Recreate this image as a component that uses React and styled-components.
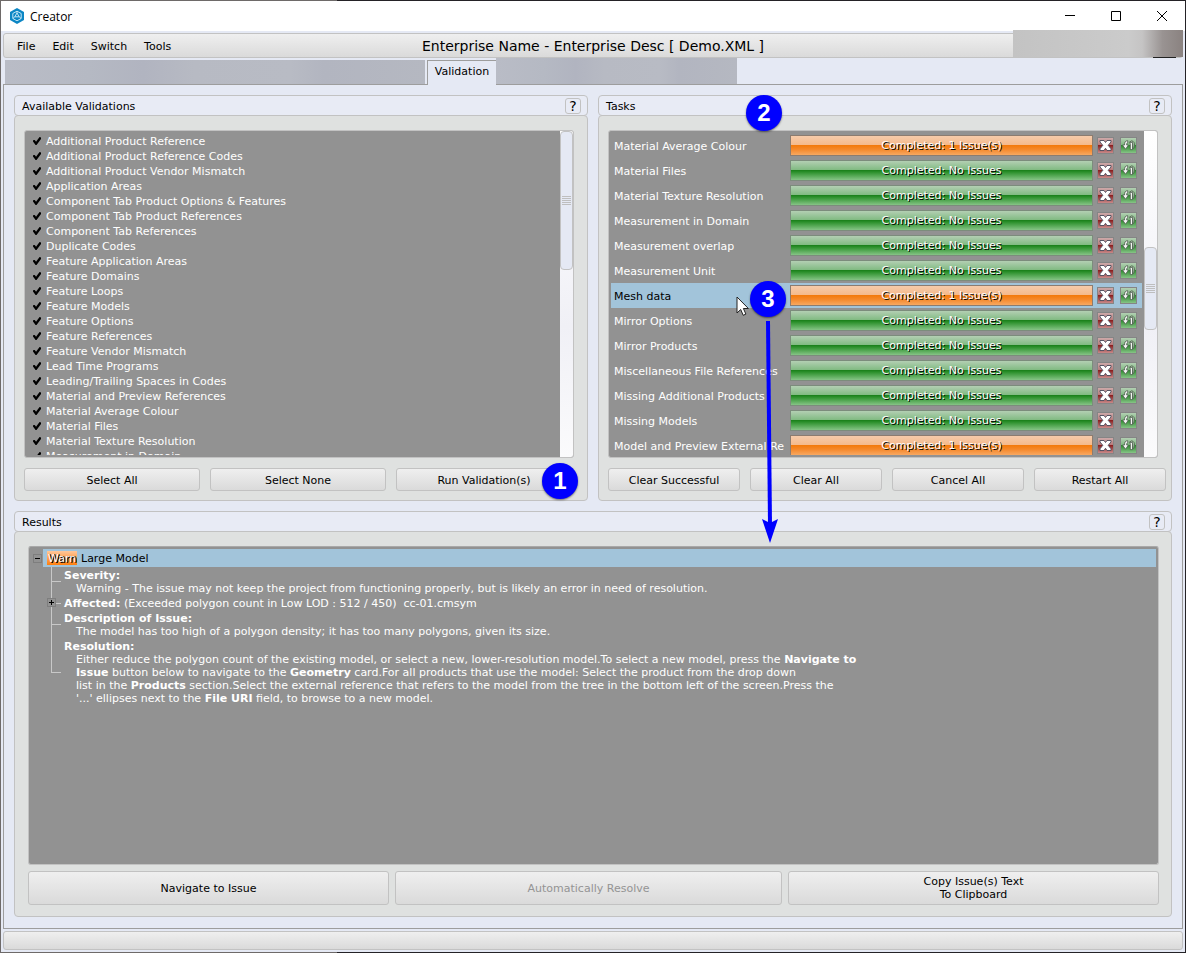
import React, { useState } from "react";
import styled, { createGlobalStyle, css } from "styled-components";

const GlobalStyle = createGlobalStyle`
  *, *::before, *::after {
    box-sizing: border-box;
  }

  body {
    margin: 0;
    background: #222;
  }

  body, button, input {
    font-family: "DejaVu Sans", Verdana, sans-serif;
    font-size: 11px;
    line-height: 13px;
    color: #000;
  }
`;

const raised = css`
  border: 1px solid #c2c2c2;
  border-radius: 3px;
  background: linear-gradient(#efefef, #dadada);
`;

const Backdrop = styled.div`
  position: relative;
  display: flex;
  min-height: 100vh;
  padding: 1px;
  background: linear-gradient(90deg, #6e6a69 337px, #242226 337px);
`;

const Window = styled.div`
  flex: 1;
  min-width: 0;
  display: flex;
  flex-direction: column;
  background: #e5e9f4;
`;

const TitleBar = styled.header`
  display: flex;
  align-items: center;
  height: 30px;
  padding-left: 8px;
  background: #fff;
  font-family: "Open Sans", "Noto Sans", sans-serif;
  font-size: 12px;

  > span {
    flex: 1;
    padding-left: 5px;
  }
`;

const CaptionButton = styled.button`
  display: flex;
  align-items: center;
  justify-content: center;
  width: 46px;
  height: 30px;
  padding: 0;
  border: 0;
  background: none;
`;

const MenuBar = styled.nav`
  ${raised}
  position: relative;
  display: flex;
  align-items: center;
  gap: 1px;
  height: 25px;
  margin: 2px 2px 0;
  padding-left: 5px;
`;

const MenuButton = styled.button`
  padding: 5px 8px 3px;
  border: 0;
  background: none;
`;

const DocumentTitle = styled.h1`
  position: absolute;
  left: 0;
  right: 0;
  margin: 0;
  padding-top: 2px;
  text-align: center;
  font-size: 14px;
  line-height: 17px;
  font-weight: normal;
  pointer-events: none;
`;

const UserArea = styled.div`
  position: absolute;
  top: -4px;
  right: -1px;
  width: 170px;
  height: 27px;
  background: linear-gradient(90deg, #c3c3c3, #cbcbcb 68%, #c5c4c4 76%, #999392 88%, #8a8280);

  &::after {
    content: "";
    position: absolute;
    top: 27px;
    right: 7px;
    width: 23px;
    height: 1px;
    background: #222;
  }
`;

const Tabs = styled.div`
  display: flex;
  align-items: stretch;
  height: 26px;
  margin: 0 4px;
`;

const TabStrip = styled.div`
  width: ${({ $width }) => $width}px;
  margin-top: ${({ $top }) => $top}px;
  background: linear-gradient(90deg, #b9bcc6, #b5b9c3 20%, #b1b4c0 33%, #b7bac3 45%, #b8bbc4 68%, #b2b5c0 76%, #b5b8c1);
`;

const Tab = styled.button`
  position: relative;
  z-index: 1;
  width: 69px;
  height: 25px;
  margin: 2px 0 -1px 2px;
  padding: 0 0 3px;
  border: 1px solid #9d9d9d;
  border-bottom: 0;
  border-right: 0;
  background: #e5e9f4;
`;

const Page = styled.main`
  flex: 1;
  display: flex;
  flex-direction: column;
  gap: 10px;
  margin: 0 2px;
  padding: 10px 10px 11px;
  border: 1px solid #9d9d9d;
`;

const Columns = styled.div`
  display: grid;
  grid-template-columns: 1fr 1fr;
  gap: 10px;
`;

const Group = styled.section`
  display: flex;
  flex-direction: column;
  flex: ${({ $grow }) => ($grow ? 1 : "none")};
  min-width: 0;
`;

const GroupHeader = styled.div`
  display: flex;
  align-items: center;
  justify-content: space-between;
  height: 21px;
  padding: 0 6px 0 7px;
  border: 1px solid #c2c2c2;
  border-radius: 4px;
  background: #e8ebf5;

  h2 {
    margin: 0;
    padding-top: 2px;
    font-size: 11px;
    font-weight: normal;
  }
`;

const HelpButton = styled.button`
  width: 16px;
  height: 16px;
  padding: 0;
  border: 1px solid #c2c2c2;
  border-radius: 3px;
  background: #e8ebf5;
  font-size: 14px;
  line-height: 14px;
`;

const GroupBody = styled.div`
  flex: 1;
  display: flex;
  flex-direction: column;
  gap: ${({ $wide }) => ($wide ? 6 : 10)}px;
  margin-top: -1px;
  padding: ${({ $wide }) => ($wide ? "14px 12px 11px 13px" : "14px 13px 9px 9px")};
  border: 1px solid #c2c2c2;
  border-radius: 4px;
  background: #dfe1e0;
`;

const ListFrame = styled.div`
  display: flex;
  height: 328px;
  border: 1px solid #c2c2c2;
  border-radius: 3px;
  background: #929292;
  overflow: hidden;
`;

const ListView = styled.ul`
  flex: 1;
  min-width: 0;
  margin: 2px;
  padding: 0;
  list-style: none;
  overflow: hidden;
  color: #fff;
`;

const Track = styled.div`
  width: 13px;
  background: linear-gradient(#fff, #f0f0f6 60%, #fbfbfc);
`;

const Thumb = styled.div`
  display: flex;
  align-items: center;
  justify-content: center;
  width: 13px;
  height: ${({ $size }) => $size}px;
  margin-top: ${({ $offset }) => $offset}px;
  border: 1px solid #c2c2c2;
  border-radius: 4px;
  background: #e5e9f4;

  &::before {
    content: "";
    width: 9px;
    height: 9px;
    background: repeating-linear-gradient(#bebebe 0 1px, transparent 1px 2px);
  }
`;

const CheckRow = styled.label`
  display: flex;
  align-items: flex-end;
  gap: 5px;
  height: 15px;
  padding-left: 6px;
  white-space: nowrap;

  input {
    appearance: none;
    width: 8px;
    height: 8px;
    margin: 0 0 3px;
  }

  input:checked {
    background: #000;
    clip-path: polygon(0 40%, 22% 36%, 38% 58%, 82% 0, 100% 6%, 100% 26%, 44% 100%, 32% 100%, 0 56%);
  }
`;

const TaskRow = styled.li`
  display: grid;
  grid-template-columns: 176px minmax(0, 1fr) 21px 23px;
  align-items: center;
  height: 25px;
  padding: 0 5px 0 3px;
  color: ${({ $selected }) => ($selected ? "#000" : "#fff")};
  background: ${({ $selected }) => ($selected ? "#a2c4da" : "none")};

  > span {
    padding-top: 2px;
    overflow: hidden;
    white-space: nowrap;
  }
`;

const barColors = {
  ok: "#b3cfb3, #7fba80 48%, #1c821c 50%, #2f932f 60%, #86c486",
  issue: "#f6cbaa, #f5b98a 48%, #f37a0c 50%, #f5882a 70%, #f7a862",
};

const StatusBar = styled.div`
  height: 21px;
  border: 1px solid ${({ $kind }) => ($kind === "ok" ? "#7c8c7c" : "#8c7c70")};
  background: linear-gradient(${({ $kind }) => barColors[$kind]});
  color: #fff;
  line-height: 20px;
  text-align: center;
  text-shadow: 1px 1px 0 #000;
  white-space: nowrap;
`;

const IconButton = styled.button`
  display: block;
  justify-self: end;
  width: 17px;
  height: 17px;
  padding: 0;
  border: 1px solid #858585;
  background: ${({ $color }) =>
    $color === "red"
      ? "linear-gradient(#cdaaaa, #b77a7a 46%, #8b2020 50%, #c88a8a)"
      : "linear-gradient(#b3cfb3, #7fba80 46%, #2f8b2f 50%, #86c486)"};

  svg {
    display: block;
  }
`;

const ButtonRow = styled.div`
  display: grid;
  grid-template-columns: ${({ $columns }) => $columns};
  gap: ${({ $gap }) => $gap}px;
  margin-right: ${({ $inset }) => $inset}px;
`;

const Button = styled.button`
  ${raised}
  min-height: ${({ $tall }) => ($tall ? 34 : 23)}px;
  padding: ${({ $tall }) => ($tall ? 0 : 2)}px 4px 0;

  &:disabled {
    color: #949494;
  }
`;

const Tree = styled.div`
  flex: 1;
  padding: 2px;
  border: 1px solid #c2c2c2;
  border-top-color: #a9a9a9;
  border-radius: 3px;
  background: #929292;
  color: #fff;
`;

const TreeRoot = styled.div`
  display: flex;
  align-items: center;
`;

const Expander = styled.button`
  display: flex;
  align-items: center;
  justify-content: center;
  width: 9px;
  height: 9px;
  margin: 0 1px 0 2px;
  padding: 0;
  border: 1px solid #7e7e7e;
  background: #929292;
`;

const RootLabel = styled.div`
  flex: 1;
  display: flex;
  align-items: center;
  gap: 4px;
  height: 18px;
  padding-left: 4px;
  background: #a2c4da;
  color: #000;
`;

const Severity = styled.span`
  height: 14px;
  width: 30px;
  padding-left: 1px;
  background: linear-gradient(#ffc79a, #ff7f0e);
  color: #fff;
  line-height: 15px;
  text-shadow: 1px 1px 0 #000, 1px 0 0 #000;
`;

const Branches = styled.ul`
  display: flex;
  flex-direction: column;
  gap: 2px;
  margin: 2px 0 0 20px;
  padding: 0;
  list-style: none;
`;

const Branch = styled.li`
  position: relative;
  padding-left: 13px;

  &::before {
    content: "";
    position: absolute;
    left: 0;
    top: -2px;
    bottom: 0;
    width: 1px;
    background: #c8c8c8;
  }

  &:last-child::before {
    bottom: 50%;
  }

  &::after {
    content: "";
    position: absolute;
    left: 0;
    top: calc(50% - 1px);
    width: 10px;
    height: 1px;
    background: #c8c8c8;
  }

  ${Expander} {
    position: absolute;
    z-index: 1;
    left: -6px;
    top: 1px;
  }

  p {
    margin: 0 0 0 12px;
  }
`;

const Footer = styled.footer`
  ${raised}
  height: 19px;
  margin: 2px;
`;

const Overlay = styled.svg`
  position: absolute;
  left: ${({ $x }) => $x}px;
  top: ${({ $y }) => $y}px;
  pointer-events: none;
`;

const Step = styled.span`
  position: absolute;
  left: ${({ $x }) => $x}px;
  top: ${({ $y }) => $y}px;
  width: 36px;
  height: 36px;
  border-radius: 50%;
  background: #00f;
  box-shadow: 0 1px 2px rgba(0, 0, 0, 0.5);
  color: #fff;
  font: bold 24px/36px "Liberation Sans", Arial, sans-serif;
  text-align: center;
  pointer-events: none;
`;

const validations = [
  "Additional Product Reference",
  "Additional Product Reference Codes",
  "Additional Product Vendor Mismatch",
  "Application Areas",
  "Component Tab Product Options & Features",
  "Component Tab Product References",
  "Component Tab References",
  "Duplicate Codes",
  "Feature Application Areas",
  "Feature Domains",
  "Feature Loops",
  "Feature Models",
  "Feature Options",
  "Feature References",
  "Feature Vendor Mismatch",
  "Lead Time Programs",
  "Leading/Trailing Spaces in Codes",
  "Material and Preview References",
  "Material Average Colour",
  "Material Files",
  "Material Texture Resolution",
  "Measurement in Domain",
];

const tasks = [
  { name: "Material Average Colour", issues: 1 },
  { name: "Material Files", issues: 0 },
  { name: "Material Texture Resolution", issues: 0 },
  { name: "Measurement in Domain", issues: 0 },
  { name: "Measurement overlap", issues: 0 },
  { name: "Measurement Unit", issues: 0 },
  { name: "Mesh data", issues: 1 },
  { name: "Mirror Options", issues: 0 },
  { name: "Mirror Products", issues: 0 },
  { name: "Miscellaneous File References", issues: 0 },
  { name: "Missing Additional Products", issues: 0 },
  { name: "Missing Models", issues: 0 },
  { name: "Model and Preview External Re", issues: 1 },
];

function Logo() {
  return (
    <svg width="16" height="16" viewBox="0 0 16 16">
      <path d="M8 0l7 4v8l-7 4-7-4V4z" fill="#0c86c4" />
      <g fill="none" stroke="#d6effa" strokeWidth="0.9">
        <path d="M8 3.200l4.200 2.300v5L8 12.800l-4.200-2.300v-5z" />
        <path d="M8 5l2.200 3.800H5.800z" />
        <path d="M8 3.400V5M4 10.400l1.800-1.600M12 10.400l-1.800-1.600" />
      </g>
    </svg>
  );
}

function CancelIcon() {
  return (
    <svg width="15" height="15" viewBox="0 0 15 15">
      <path
        d="M2 2.500h4l1.500 2 1.500-2h4v1.500L10.200 7.300 13 10.800v1.700H9L7.500 10.300 6 12.500H2v-1.700L4.800 7.300 2 4z"
        fill="#fff"
        stroke="#4a4a5a"
        strokeWidth="0.9"
      />
    </svg>
  );
}

function RestartIcon() {
  return (
    <svg width="15" height="15" viewBox="0 0 15 15">
      <path
        d="M6.700 2.700C4.200 2.700 3.500 4.300 3.500 7H1.500l3 4.200 3-4.200H5.700c0-1.600.2-2 1-2.200z"
        fill="#f4f4f4"
        stroke="#4c5a4c"
        strokeWidth="0.8"
      />
      <path
        d="M8.300 4.200l2.400-1.400c2.400.6 3 2.400 2.800 4.400-.2 1.700-.8 3-1.700 3.800V5.500"
        fill="#a8c8a8"
        stroke="#4c5a4c"
        strokeWidth="0.8"
      />
      <path d="M8.700 4.400h2.800v7.200H9.300V6z" fill="#f4f4f4" stroke="#4c5a4c" strokeWidth="0.8" />
    </svg>
  );
}

function Sign({ plus }) {
  return (
    <svg width="7" height="7" viewBox="0 0 7 7">
      <path d={plus ? "M1 3.500h5M3.500 1v5" : "M1 3.500h5"} stroke="#000" />
    </svg>
  );
}

function Panel({ title, grow, wide, children }) {
  return (
    <Group $grow={grow}>
      <GroupHeader>
        <h2>{title}</h2>
        <HelpButton>?</HelpButton>
      </GroupHeader>
      <GroupBody $wide={wide}>{children}</GroupBody>
    </Group>
  );
}

function Validations() {
  const [unchecked, setUnchecked] = useState([]);

  const toggle = (name) =>
    setUnchecked((list) =>
      list.includes(name) ? list.filter((n) => n !== name) : [...list, name]
    );

  return (
    <Panel title="Available Validations">
      <ListFrame>
        <ListView>
          {validations.map((name) => (
            <li key={name}>
              <CheckRow>
                <input
                  type="checkbox"
                  checked={!unchecked.includes(name)}
                  onChange={() => toggle(name)}
                />
                {name}
              </CheckRow>
            </li>
          ))}
        </ListView>
        <Track>
          <Thumb $offset={0} $size={139} />
        </Track>
      </ListFrame>
      <ButtonRow $columns="repeat(3, 1fr)" $gap={10} $inset={2}>
        <Button onClick={() => setUnchecked([])}>Select All</Button>
        <Button onClick={() => setUnchecked(validations)}>Select None</Button>
        <Button>Run Validation(s)</Button>
      </ButtonRow>
    </Panel>
  );
}

function Tasks() {
  const [selected, setSelected] = useState("Mesh data");

  return (
    <Panel title="Tasks">
      <ListFrame>
        <ListView>
          {tasks.map(({ name, issues }) => (
            <TaskRow
              key={name}
              $selected={name === selected}
              onClick={() => setSelected(name)}
            >
              <span>{name}</span>
              <StatusBar $kind={issues ? "issue" : "ok"}>
                {issues ? `Completed: ${issues} Issue(s)` : "Completed: No Issues"}
              </StatusBar>
              <IconButton $color="red">
                <CancelIcon />
              </IconButton>
              <IconButton $color="green">
                <RestartIcon />
              </IconButton>
            </TaskRow>
          ))}
        </ListView>
        <Track>
          <Thumb $offset={116} $size={83} />
        </Track>
      </ListFrame>
      <ButtonRow $columns="repeat(4, 1fr)" $gap={10} $inset={-8}>
        <Button>Clear Successful</Button>
        <Button>Clear All</Button>
        <Button>Cancel All</Button>
        <Button>Restart All</Button>
      </ButtonRow>
    </Panel>
  );
}

function Results() {
  return (
    <Panel title="Results" grow wide>
      <Tree>
        <TreeRoot>
          <Expander>
            <Sign />
          </Expander>
          <RootLabel>
            <Severity>Warn</Severity>
            Large Model
          </RootLabel>
        </TreeRoot>
        <Branches>
          <Branch>
            <b>Severity:</b>
            <p>
              Warning - The issue may not keep the project from functioning
              properly, but is likely an error in need of resolution.
            </p>
          </Branch>
          <Branch>
            <Expander>
              <Sign plus />
            </Expander>
            <b>Affected:</b> (Exceeded polygon count in Low LOD : 512 / 450)
            &nbsp;cc-01.cmsym
          </Branch>
          <Branch>
            <b>Description of Issue:</b>
            <p>
              The model has too high of a polygon density; it has too many
              polygons, given its size.
            </p>
          </Branch>
          <Branch>
            <b>Resolution:</b>
            <p>
              Either reduce the polygon count of the existing model, or select a
              new, lower-resolution model.To select a new model, press the{" "}
              <b>Navigate to</b>
              <br />
              <b>Issue</b> button below to navigate to the <b>Geometry</b>{" "}
              card.For all products that use the model: Select the product from
              the drop down
              <br />
              list in the <b>Products</b> section.Select the external reference
              that refers to the model from the tree in the bottom left of the
              screen.Press the
              <br />
              '...' ellipses next to the <b>File URI</b> field, to browse to a
              new model.
            </p>
          </Branch>
        </Branches>
      </Tree>
      <ButtonRow $columns="361fr 387fr 371fr" $gap={6} $inset={0}>
        <Button $tall>Navigate to Issue</Button>
        <Button $tall disabled>
          Automatically Resolve
        </Button>
        <Button $tall>
          Copy Issue(s) Text
          <br />
          To Clipboard
        </Button>
      </ButtonRow>
    </Panel>
  );
}

export default function App() {
  return (
    <Backdrop>
      <GlobalStyle />
      <Window>
        <TitleBar>
          <Logo />
          <span>Creator</span>
          <CaptionButton aria-label="Minimize">
            <svg width="10" height="10">
              <path d="M0 4.500h10" stroke="#000" />
            </svg>
          </CaptionButton>
          <CaptionButton aria-label="Maximize">
            <svg width="10" height="10">
              <path d="M.5.5h9v9h-9z" fill="none" stroke="#000" />
            </svg>
          </CaptionButton>
          <CaptionButton aria-label="Close">
            <svg width="10" height="10">
              <path d="M0 0l10 10M10 0L0 10" stroke="#000" />
            </svg>
          </CaptionButton>
        </TitleBar>
        <MenuBar>
          <MenuButton>File</MenuButton>
          <MenuButton>Edit</MenuButton>
          <MenuButton>Switch</MenuButton>
          <MenuButton>Tools</MenuButton>
          <DocumentTitle>Enterprise Name - Enterprise Desc [ Demo.XML ]</DocumentTitle>
          <UserArea />
        </MenuBar>
        <Tabs>
          <TabStrip $width={420} $top={2} />
          <Tab>Validation</Tab>
          <TabStrip $width={241} $top={0} />
        </Tabs>
        <Page>
          <Columns>
            <Validations />
            <Tasks />
          </Columns>
          <Results />
        </Page>
        <Footer />
      </Window>
      <Overlay $x={736} $y={296} width="14" height="21" viewBox="0 0 14 21">
        <path
          d="M1 1v16l3.700-3.500L7.200 19.300l2.700-1.200L7.400 12.500h5z"
          fill="#fff"
          stroke="#222"
          strokeWidth="1"
        />
      </Overlay>
      <Overlay $x={760} $y={320} width="20" height="224" viewBox="0 0 20 224">
        <path d="M8 1l2 204" stroke="#00f" strokeWidth="4" />
        <path d="M2 199l8 4 8-4-8 24z" fill="#00f" />
      </Overlay>
      <Step $x={542} $y={463}>1</Step>
      <Step $x={746} $y={95}>2</Step>
      <Step $x={750} $y={281}>3</Step>
    </Backdrop>
  );
}
